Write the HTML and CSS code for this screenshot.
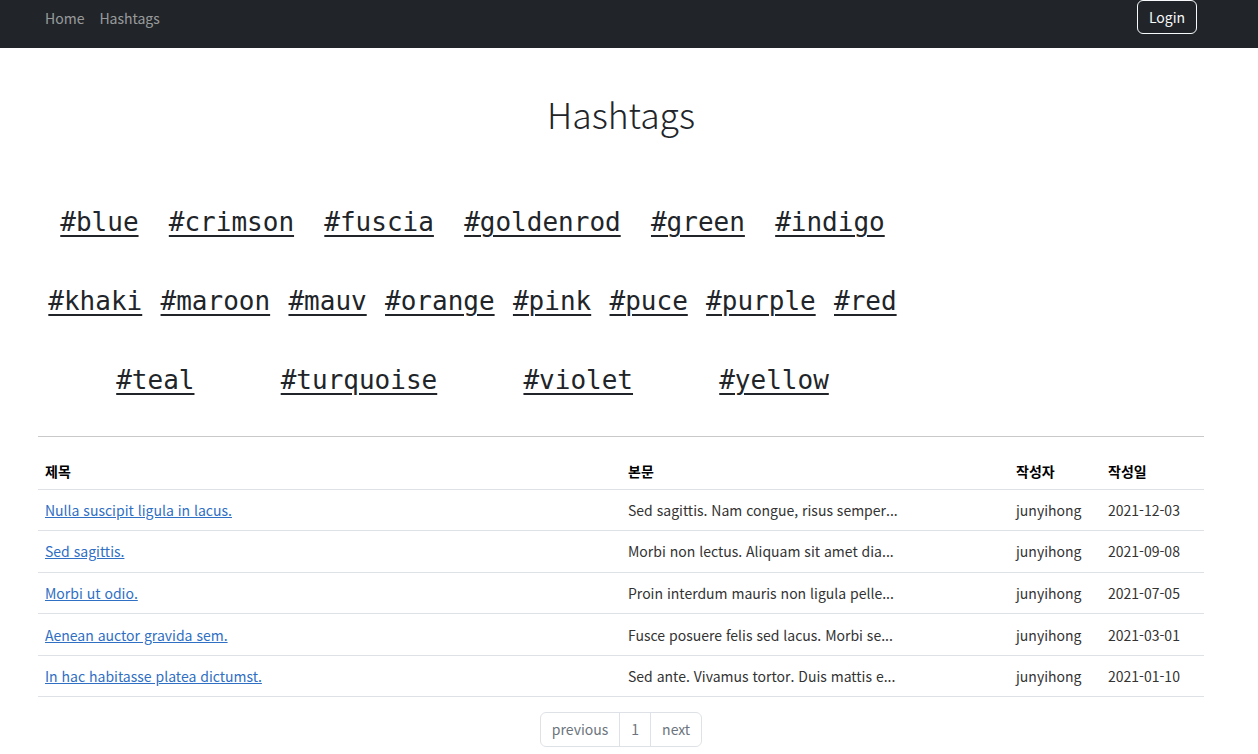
FILE: index.html
```html
<!DOCTYPE html>
<html lang="ko">
<head>
<meta charset="utf-8">
<title>Hashtags</title>
<link rel="stylesheet" href="styles.css">
</head>
<body>
<nav class="navbar">
  <div class="navbar-inner">
    <ul class="nav">
      <li><a class="nav-link" href="#">Home</a></li>
      <li><a class="nav-link" href="#">Hashtags</a></li>
    </ul>
    <a class="btn-login" href="#">Login</a>
  </div>
</nav>
<main class="page">
  <h1 class="title">Hashtags</h1>
  <section class="tags">
    <div class="tag-row">
      <a href="#">#blue</a><a href="#">#crimson</a><a href="#">#fuscia</a><a href="#">#goldenrod</a><a href="#">#green</a><a href="#">#indigo</a>
    </div>
    <div class="tag-row">
      <a href="#">#khaki</a><a href="#">#maroon</a><a href="#">#mauv</a><a href="#">#orange</a><a href="#">#pink</a><a href="#">#puce</a><a href="#">#purple</a><a href="#">#red</a>
    </div>
    <div class="tag-row">
      <a href="#">#teal</a><a href="#">#turquoise</a><a href="#">#violet</a><a href="#">#yellow</a>
    </div>
  </section>
  <hr class="divider">
  <table class="articles">
    <colgroup>
      <col class="c-title"><col class="c-body"><col class="c-author"><col class="c-date">
    </colgroup>
    <thead>
      <tr><th>제목</th><th>본문</th><th>작성자</th><th>작성일</th></tr>
    </thead>
    <tbody>
      <tr><td><a href="#">Nulla suscipit ligula in lacus.</a></td><td>Sed sagittis. Nam congue, risus semper...</td><td>junyihong</td><td>2021-12-03</td></tr>
      <tr><td><a href="#">Sed sagittis.</a></td><td>Morbi non lectus. Aliquam sit amet dia...</td><td>junyihong</td><td>2021-09-08</td></tr>
      <tr><td><a href="#">Morbi ut odio.</a></td><td>Proin interdum mauris non ligula pelle...</td><td>junyihong</td><td>2021-07-05</td></tr>
      <tr><td><a href="#">Aenean auctor gravida sem.</a></td><td>Fusce posuere felis sed lacus. Morbi se...</td><td>junyihong</td><td>2021-03-01</td></tr>
      <tr><td><a href="#">In hac habitasse platea dictumst.</a></td><td>Sed ante. Vivamus tortor. Duis mattis e...</td><td>junyihong</td><td>2021-01-10</td></tr>
    </tbody>
  </table>
  <nav class="pager">
    <ul class="pagination">
      <li class="page-item">previous</li>
      <li class="page-item">1</li>
      <li class="page-item">next</li>
    </ul>
  </nav>
</main>
</body>
</html>
```

FILE: styles.css
```css
* { box-sizing: border-box; }
html, body { margin: 0; padding: 0; }
body {
  font-family: "Noto Sans CJK KR", "Noto Sans", sans-serif;
  font-size: 14px;
  color: #212529;
  background: #fff;
  overflow: hidden;
}
.navbar { background: #212529; height: 48px; }
.navbar-inner {
  width: 1242px;
  height: 48px;
  display: flex;
  justify-content: space-between;
  align-items: flex-start;
  padding: 0 45px 0 37px;
}
.nav { list-style: none; margin: 0; padding: 0; display: flex; }
.nav-link {
  display: block;
  color: rgba(255,255,255,.55);
  text-decoration: none;
  padding: 0 7px 0 8px;
  line-height: 36px;
  font-size: 14px;
}
.btn-login {
  display: block;
  width: 60px;
  height: 34px;
  border: 1px solid #f8f9fa;
  border-radius: 6px;
  color: #f8f9fa;
  text-decoration: none;
  text-align: center;
  line-height: 33px;
  font-size: 14px;
}
.page { width: 1242px; padding: 0 38px; }
.title {
  margin: 0;
  padding-top: 36px;
  height: 134px;
  text-align: center;
  font-weight: 300;
  font-size: 35.5px;
  line-height: 60px;
}
.tags { width: 885px; margin-left: -8px; }
.tag-row {
  display: flex;
  justify-content: space-evenly;
  height: 79px;
  align-items: center;
}
.tag-row a {
  font-family: "DejaVu Sans Mono", "Liberation Mono", monospace;
  font-size: 26px;
  color: #212529;
  text-decoration: underline;
  text-decoration-thickness: 2px;
  text-underline-offset: 4px;
}
.divider {
  margin: 17px 0 14px;
  border: 0;
  border-top: 1px solid #c8c9ca;
}
.articles {
  width: 100%;
  border-collapse: collapse;
  table-layout: fixed;
}
.c-title { width: 583px; }
.c-body { width: 388px; }
.c-author { width: 92px; }
.c-date { width: 103px; }
.articles th, .articles td {
  text-align: left;
  padding: 0 7px;
  border-bottom: 1px solid #dee2e6;
  white-space: nowrap;
}
.articles th { height: 38px; font-weight: 700; color: #000; vertical-align: middle; padding-top: 2px; }
.articles td { height: 41.6px; color: #333; }
.articles td a { color: #2f6fc4; }
.pager { display: flex; justify-content: center; padding-top: 15px; }
.pagination {
  list-style: none;
  margin: 0;
  padding: 0;
  display: flex;
  border: 1px solid #dee2e6;
  border-radius: 6px;
  height: 35px;
}
.page-item {
  color: #6c757d;
  padding: 0 11px;
  line-height: 33px;
  font-size: 14px;
}
.page-item + .page-item { border-left: 1px solid #dee2e6; }
```
